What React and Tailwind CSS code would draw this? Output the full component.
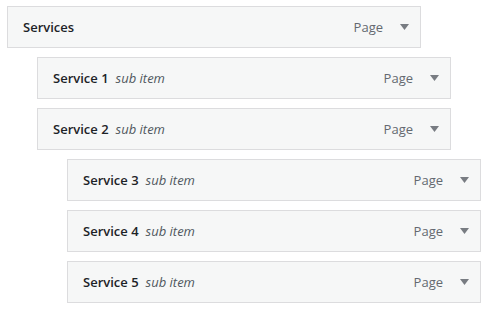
const items = [
  { title: 'Services', depth: 0 },
  { title: 'Service 1', depth: 1, sub: true },
  { title: 'Service 2', depth: 1, sub: true },
  { title: 'Service 3', depth: 2, sub: true },
  { title: 'Service 4', depth: 2, sub: true },
  { title: 'Service 5', depth: 2, sub: true },
];

const indent = ['ml-0', 'ml-[30px]', 'ml-[60px]'];

const MenuItem = ({ title, depth, sub }) => (
  <div
    className={`${indent[depth]} w-[414px] h-[42px] flex items-center border border-[#dcdcde] bg-[#f6f7f7] pl-[15px] pr-[10px] pt-[2px]`}
  >
    <span className="flex-1 text-[13px] text-[#1d2327]">
      <span className="font-semibold">{title}</span>
      {sub && <span className="ml-[7px] italic text-[#50575e]">sub item</span>}
    </span>
    <span className="text-[13px] text-[#646970] mr-[1px]">Page</span>
    <svg width="9" height="6" viewBox="0 0 9 6" className="ml-[16px] mr-[1px] mt-[-3px]">
      <path d="M0 0h9L4.5 6z" fill="#787c82" />
    </svg>
  </div>
);

export default function App() {
  return (
    <div
      className="w-[492px] h-[312px] bg-white pt-[6px] pl-[7px] flex flex-col gap-[9px]"
      style={{ fontFamily: '"Open Sans", "Noto Sans", sans-serif' }}
    >
      {items.map((it) => (
        <MenuItem key={it.title} {...it} />
      ))}
    </div>
  );
}
